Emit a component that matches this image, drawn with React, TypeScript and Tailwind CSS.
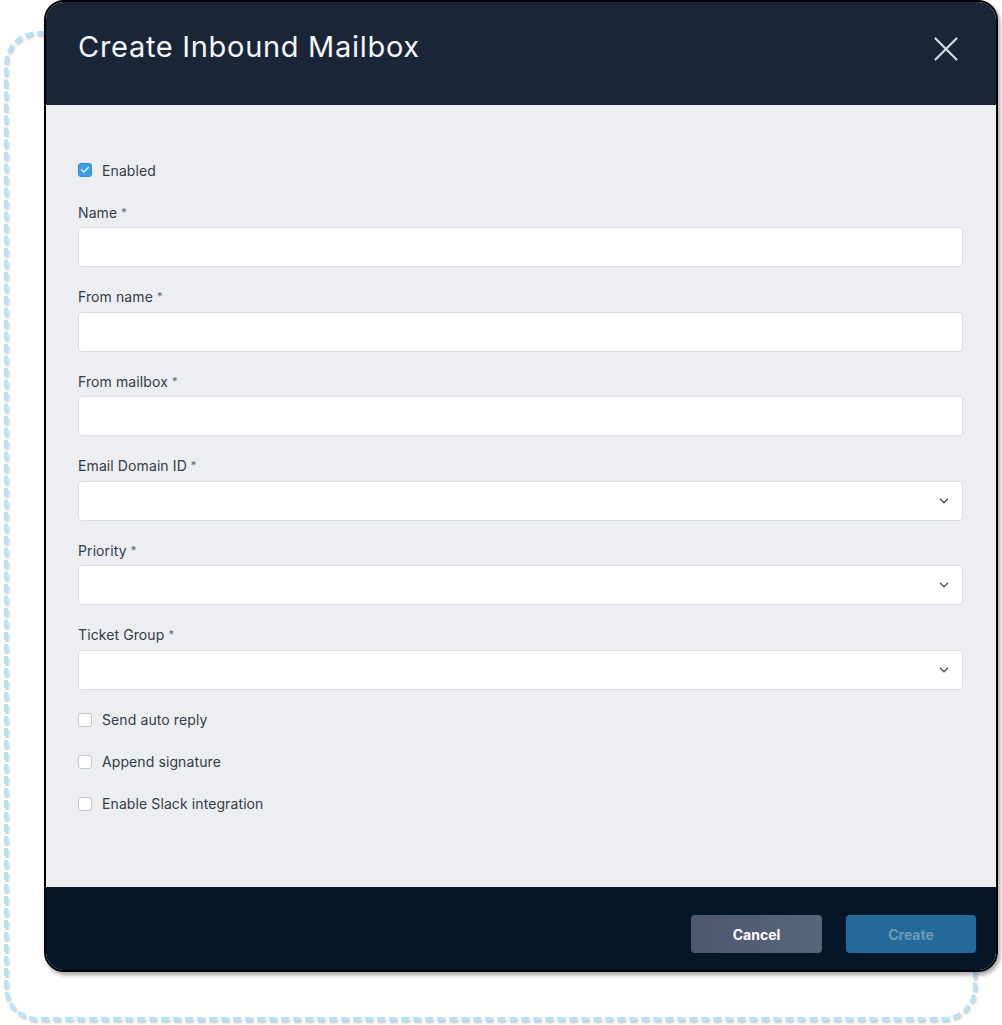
import { Check, ChevronDown, X } from "lucide-react";

const TEXT_FIELDS = ["Name", "From name", "From mailbox"];
const SELECT_FIELDS = ["Email Domain ID", "Priority", "Ticket Group"];
const OPTIONS = ["Send auto reply", "Append signature", "Enable Slack integration"];

function CheckRow({ label, checked = false }: { label: string; checked?: boolean }) {
  return (
    <label className="flex items-center gap-[10px] h-[20px]">
      {checked ? (
        <span className="w-[14px] h-[14px] rounded-[3px] bg-[#3a9fe6] border border-[#2f8fd6] flex items-center justify-center">
          <Check className="w-[10px] h-[10px] text-white" strokeWidth={3} />
        </span>
      ) : (
        <span className="w-[14px] h-[14px] rounded-[3px] bg-white border border-[#c3c7ce]" />
      )}
      <span className="text-[14px] tracking-[0.1px] text-[#343b47]">{label}</span>
    </label>
  );
}

function FieldLabel({ text }: { text: string }) {
  return (
    <div className="h-[20px] flex items-center text-[14px] tracking-[0.1px] text-[#343b47]">
      {text}
      <span className="ml-[4px] text-[11px] text-[#59606b]">*</span>
    </div>
  );
}

export default function App() {
  return (
    <div className="relative w-[1002px] h-[1025px] bg-white" style={{ fontFamily: "Inter, 'Noto Sans', sans-serif" }}>
      {/* dashed outline behind the dialog */}
      <div className="absolute left-[4px] top-[31px] w-[973px] h-[990px] rounded-[34px] border-[4px] border-dashed border-[#b8e2fa] drop-shadow-[1px_2px_1px_rgba(0,0,0,0.22)]" />

      <div className="relative ml-[44px] w-[954px] h-[972px] rounded-[20px] border-[2px] border-black overflow-hidden flex flex-col shadow-[2px_3px_4px_rgba(0,0,0,0.35)]">
        <div className="h-[103px] bg-[#1a2638] flex items-start justify-between pl-[32px] pr-[29px] pt-[26px]">
          <h1 className="text-[29px] leading-[38px] tracking-[0.7px] text-[#f5f7fa] font-normal" style={{ fontFamily: "Inter, 'Open Sans', sans-serif" }}>
            Create Inbound Mailbox
          </h1>
          <X className="w-[42px] h-[42px] mt-[0px] text-[#d5dae1]" strokeWidth={1.3} />
        </div>

        <div className="flex-1 bg-[#eceef2] pl-[32px] pr-[33px] pt-[55px]">
          <CheckRow label="Enabled" checked />
          <div className="mt-[22px] flex flex-col gap-[19.5px]">
            {TEXT_FIELDS.map((f) => (
              <div key={f} className="flex flex-col gap-[5px]">
                <FieldLabel text={f} />
                <div className="h-[40px] bg-white border border-[#dadde2] rounded-[4px]" />
              </div>
            ))}
            {SELECT_FIELDS.map((f) => (
              <div key={f} className="flex flex-col gap-[5px]">
                <FieldLabel text={f} />
                <div className="h-[40px] bg-white border border-[#dadde2] rounded-[4px] flex items-center justify-end pr-[11px]">
                  <ChevronDown className="w-[14px] h-[14px] text-[#4b5260]" strokeWidth={2.5} />
                </div>
              </div>
            ))}
          </div>
          <div className="mt-[20px] flex flex-col gap-[22px]">
            {OPTIONS.map((o) => (
              <CheckRow key={o} label={o} />
            ))}
          </div>
        </div>

        <div className="h-[83px] bg-[#041628] flex items-start justify-end gap-[24px] pr-[20px] pt-[28px]">
          <button className="w-[131px] h-[38px] rounded-[4px] bg-gradient-to-r from-[#4f5670] to-[#56667a] text-white text-[14px] font-bold">
            Cancel
          </button>
          <button className="w-[130px] h-[38px] rounded-[4px] bg-[#236a9b] text-[#6f9bbb] text-[14px] font-bold">
            Create
          </button>
        </div>
      </div>
    </div>
  );
}
